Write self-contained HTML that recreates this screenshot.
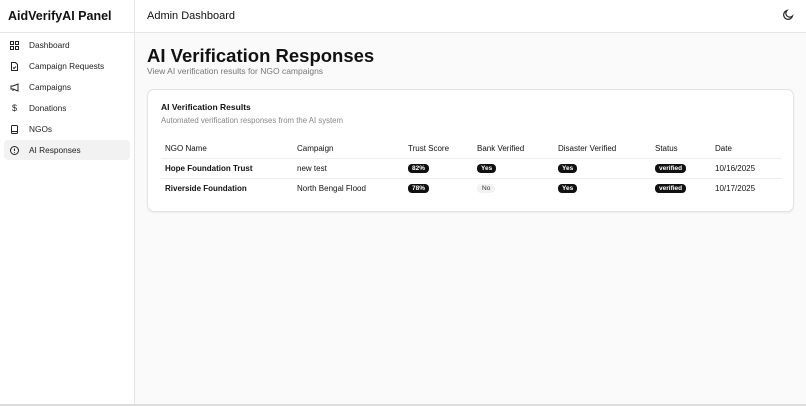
<!DOCTYPE html>
<html><head><style>
*{box-sizing:border-box;margin:0;padding:0}
body{width:806px;height:406px;overflow:hidden;font-family:"Liberation Sans",sans-serif;background:#fafafa;color:#111;position:relative}
.side{position:absolute;left:0;top:0;width:135px;height:406px;background:#fff;border-right:1px solid #e5e5e5}
.logo{height:33px;border-bottom:1px solid #e5e5e5;padding:9px 0 0 8px;font-weight:bold;font-size:12.5px}
.nav{padding:2px 4px}
.it{height:20px;margin-bottom:1px;display:flex;align-items:center;padding-left:6px;font-size:8.3px;color:#222;border-radius:4px}
.it.act{background:#f2f2f2}
.ic{width:9px;height:9px;margin-right:10px;display:flex;align-items:center;justify-content:center;font-size:9px}
.top{position:absolute;left:135px;top:0;right:0;height:33px;border-bottom:1px solid #e5e5e5;background:#fff;font-size:11px;padding:10px 0 0 12px}
h1{position:absolute;left:147px;top:45px;font-size:18.5px;font-weight:bold}
.sub{position:absolute;left:147px;top:66px;font-size:8.5px;color:#777}
.card{position:absolute;left:147px;top:89px;width:647px;height:123px;background:#fff;border:1px solid #e3e3e3;border-radius:7px;box-shadow:0 1px 2px rgba(0,0,0,.06)}
.ct{position:absolute;left:13px;top:12px;font-size:8.5px;font-weight:bold}
.cs{position:absolute;left:13px;top:26px;font-size:7.8px;color:#888}
.row{position:absolute;left:13px;width:621px;height:20px;font-size:8px;border-bottom:1px solid #eee}
.row span{position:absolute;top:5px}
.b{background:#111;color:#fff;border-radius:4px;padding:1px 4px;font-size:6.5px;font-weight:bold;top:5px!important}
.n{background:#f2f2f2;color:#333;border-radius:4px;padding:1px 5px;font-size:6.5px;top:5px!important}
.bot{position:absolute;left:0;right:0;bottom:0;height:2px;background:#ddd}
</style></head><body>
<div class="side"><div class="logo">AidVerifyAI Panel</div>
<div class="nav">
<div class="it"><span class="ic"><svg width="9" height="9" viewBox="0 0 9 9" fill="none" stroke="#222" stroke-width="1"><rect x=".5" y=".5" width="3" height="3"/><rect x="5.5" y=".5" width="3" height="3"/><rect x=".5" y="5.5" width="3" height="3"/><rect x="5.5" y="5.5" width="3" height="3"/></svg></span>Dashboard</div>
<div class="it"><span class="ic"><svg width="9" height="9" viewBox="0 0 9 9" fill="none" stroke="#222" stroke-width="1"><path d="M1.5 .5h4l2 2v6h-6z"/><path d="M3 5.5l1 1 2-2"/></svg></span>Campaign Requests</div>
<div class="it"><span class="ic"><svg width="9" height="9" viewBox="0 0 9 9" fill="none" stroke="#222" stroke-width="1"><path d="M1 3h2l5-2v7L3 6H1z"/><path d="M3 6v2"/></svg></span>Campaigns</div>
<div class="it"><span class="ic">$</span>Donations</div>
<div class="it"><span class="ic"><svg width="9" height="9" viewBox="0 0 9 9" fill="none" stroke="#222" stroke-width="1"><rect x="1.5" y=".5" width="6" height="8" rx="1"/><path d="M1.5 6.5h6"/></svg></span>NGOs</div>
<div class="it act"><span class="ic"><svg width="9" height="9" viewBox="0 0 9 9" fill="none" stroke="#222" stroke-width="1"><circle cx="4.5" cy="4.5" r="4"/><path d="M4.5 2.5v2.5M4.5 6v.7"/></svg></span>AI Responses</div>
</div></div>
<div class="top">Admin Dashboard
<svg style="position:absolute;right:12px;top:9px" width="12" height="12" viewBox="0 0 12 12" fill="none" stroke="#222" stroke-width="1.2"><path d="M10.5 7A4.5 4.5 0 1 1 5 1.5a3.5 3.5 0 0 0 5.5 5.5z"/></svg></div>
<h1>AI Verification Responses</h1>
<div class="sub">View AI verification results for NGO campaigns</div>
<div class="card">
<div class="ct">AI Verification Results</div>
<div class="cs">Automated verification responses from the AI system</div>
<div class="row" style="top:49px"><span style="left:4px">NGO Name</span><span style="left:136px">Campaign</span><span style="left:247px">Trust Score</span><span style="left:316px">Bank Verified</span><span style="left:397px">Disaster Verified</span><span style="left:494px">Status</span><span style="left:554px">Date</span></div>
<div class="row" style="top:69px"><span style="left:4px;font-weight:bold">Hope Foundation Trust</span><span style="left:136px">new test</span><span class="b" style="left:247px">82%</span><span class="b" style="left:316px">Yes</span><span class="b" style="left:397px">Yes</span><span class="b" style="left:494px">verified</span><span style="left:554px">10/16/2025</span></div>
<div class="row" style="top:89px;border:none"><span style="left:4px;font-weight:bold">Riverside Foundation</span><span style="left:136px">North Bengal Flood</span><span class="b" style="left:247px">78%</span><span class="n" style="left:316px">No</span><span class="b" style="left:397px">Yes</span><span class="b" style="left:494px">verified</span><span style="left:554px">10/17/2025</span></div>
</div>
<div class="bot"></div>
</body></html>
